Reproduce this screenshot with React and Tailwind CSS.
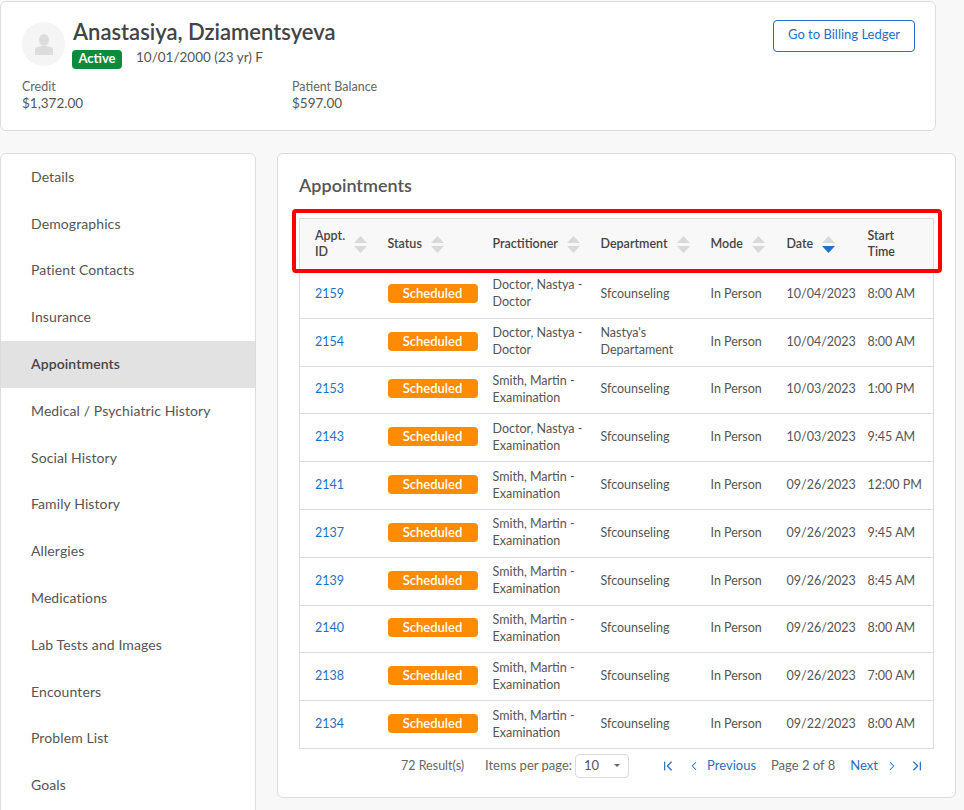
import React from 'react';
import { ChevronLeft, ChevronRight, ChevronFirst, ChevronLast } from 'lucide-react';

const navItems = [
  'Details', 'Demographics', 'Patient Contacts', 'Insurance', 'Appointments',
  'Medical / Psychiatric History', 'Social History', 'Family History', 'Allergies',
  'Medications', 'Lab Tests and Images', 'Encounters', 'Problem List', 'Goals',
];

const SM = 'Smith, Martin - Examination';
const rows = [
  ['2159', 'Doctor, Nastya - Doctor', 'Sfcounseling', '10/04/2023', '8:00 AM'],
  ['2154', 'Doctor, Nastya - Doctor', "Nastya's Departament", '10/04/2023', '8:00 AM'],
  ['2153', SM, 'Sfcounseling', '10/03/2023', '1:00 PM'],
  ['2143', 'Doctor, Nastya - Examination', 'Sfcounseling', '10/03/2023', '9:45 AM'],
  ['2141', SM, 'Sfcounseling', '09/26/2023', '12:00 PM'],
  ['2137', SM, 'Sfcounseling', '09/26/2023', '9:45 AM'],
  ['2139', SM, 'Sfcounseling', '09/26/2023', '8:45 AM'],
  ['2140', SM, 'Sfcounseling', '09/26/2023', '8:00 AM'],
  ['2138', SM, 'Sfcounseling', '09/26/2023', '7:00 AM'],
  ['2134', SM, 'Sfcounseling', '09/22/2023', '8:00 AM'],
];

const SortIcon = ({ active }) => (
  <svg width="13" height="19" viewBox="0 0 13 19" className="mt-[2px] shrink-0">
    <path d="M6.5 1 L13 8 L0 8 Z" fill="#d9d9d9" />
    <path d="M0 11 L13 11 L6.5 18 Z" fill={active ? '#1f6fc4' : '#d9d9d9'} />
  </svg>
);

const Th = ({ children, sort, active, className = '' }) => (
  <th className={`pl-4 pr-0 pb-[2px] font-semibold text-left text-[12.5px] leading-4 text-[#444] ${className}`}>
    <div className="flex items-center gap-[9px]">
      <span>{children}</span>
      {sort && <SortIcon active={active} />}
    </div>
  </th>
);

export default function App() {
  return (
    <div className="h-[810px] w-[964px] overflow-hidden bg-[#f8f8f8] pt-px font-['Lato','Open_Sans',sans-serif] text-[13px] text-[#555]">
      <div className="flex h-[130px] w-[936px] flex-col rounded-md border border-[#dcdcdc] bg-white pl-[21px] pr-5 pt-5">
        <div className="flex items-start justify-between">
          <div className="flex gap-2">
            <div className="flex h-[44px] w-[43px] items-center justify-center rounded-full bg-[#f5f5f5]">
              <svg width="18" height="21" viewBox="0 0 18 21">
                <ellipse cx="9" cy="6" rx="5" ry="6" fill="#dcdcdc" />
                <path d="M0 21 V16 C0 13 4 12 9 12 C14 12 18 13 18 16 V21 Z" fill="#dcdcdc" />
              </svg>
            </div>
            <div className="-mt-px">
              <div className="text-[22px] font-semibold leading-[22px] text-[#444]">Anastasiya, Dziamentsyeva</div>
              <div className="mt-[4px] -ml-px flex items-center gap-[14px]">
                <span className="flex h-[19px] w-[50px] items-center justify-center rounded-sm bg-[#0f8a3c] pb-[2px] text-[13px] font-bold text-white">Active</span>
                <span className="pb-[5px] text-[13.5px] text-[#555]">10/01/2000 (23 yr) F</span>
              </div>
            </div>
          </div>
          <button className="mt-[-2px] h-8 w-[142px] rounded border border-[#1f6fc4] pb-[3px] text-[13px] text-[#1f6fc4]">Go to Billing Ledger</button>
        </div>
        <div className="mt-[7px] flex">
          <div className="w-[270px]">
            <div className="text-[12.5px] leading-4 text-[#666]">Credit</div>
            <div className="text-[13.5px] leading-[17px]">$1,372.00</div>
          </div>
          <div>
            <div className="text-[12.5px] leading-4 text-[#666]">Patient Balance</div>
            <div className="text-[13.5px] leading-[17px]">$597.00</div>
          </div>
        </div>
      </div>

      <div className="mt-[22px] flex items-start gap-[21px]">
        <div className="w-[256px] shrink-0 rounded-md border border-[#dcdcdc] bg-white pb-4">
          {navItems.map((item) => (
            <div
              key={item}
              className={`flex h-[46.8px] items-center pb-[2px] pl-[30px] text-[14px] tracking-[0.1px] ${item === 'Appointments' ? 'bg-[#e2e2e2] font-semibold text-[#444]' : 'text-[#555]'}`}
            >
              {item}
            </div>
          ))}
        </div>

        <div className="relative h-[645px] w-[679px] rounded-md border border-[#dcdcdc] bg-white px-[21px]">
          <h2 className="pt-[20px] text-[18px] font-semibold leading-[22px] text-[#555]">Appointments</h2>
          <table className="mt-[22px] w-[634px] table-fixed border-collapse">
            <colgroup>
              <col className="w-[72px]" />
              <col className="w-[105px]" />
              <col className="w-[108px]" />
              <col className="w-[110px]" />
              <col className="w-[76px]" />
              <col className="w-[81px]" />
              <col className="w-[82px]" />
            </colgroup>
            <thead>
              <tr className="h-[52px] border border-[#dcdcdc] bg-[#f8f8f8]">
                <Th sort className="!pl-[15px]">Appt.<br />ID</Th>
                <Th sort>Status</Th>
                <Th sort>Practitioner</Th>
                <Th sort>Department</Th>
                <Th sort>Mode</Th>
                <Th sort active>Date</Th>
                <Th>Start<br />Time</Th>
              </tr>
            </thead>
            <tbody>
              {rows.map((r) => (
                <tr key={r[0]} className="h-[47.8px] border border-[#dcdcdc] text-[12.5px] leading-[17px]">
                  <td className="pb-[2px] pl-[15px] text-[#1f6fc4]">{r[0]}</td>
                  <td className="pb-[2px] pl-4">
                    <span className="flex h-[19px] w-[90px] items-center justify-center rounded-sm bg-[#ff8c00] text-[13px] font-semibold text-white">Scheduled</span>
                  </td>
                  <td className="pb-[2px] pl-4">{r[1]}</td>
                  <td className="pb-[2px] pl-4 pr-2">{r[2]}</td>
                  <td className="pb-[2px] pl-4">In Person</td>
                  <td className="pb-[2px] pl-4">{r[3]}</td>
                  <td className="pb-[2px] pl-4">{r[4]}</td>
                </tr>
              ))}
            </tbody>
          </table>

          <div className="mt-[5px] flex h-6 items-center text-[13px]">
            <span className="ml-[102px] w-[84px] text-[12.5px] text-[#666]">72 Result(s)</span>
            <span className="text-[#666]">Items per page:</span>
            <div className="ml-[3px] flex h-6 w-[54px] items-center justify-between rounded border border-[#dcdcdc] pl-2 pr-2">
              <span>10</span>
              <svg width="6" height="3" viewBox="0 0 6 3"><path d="M0 0 H6 L3 3 Z" fill="#666" /></svg>
            </div>
            <ChevronFirst size={16} strokeWidth={1.75} className="ml-[31px] text-[#1f6fc4]" />
            <ChevronLeft size={14} strokeWidth={1.75} className="ml-[11px] text-[#1f6fc4]" />
            <span className="ml-[6px] text-[#1f6fc4]">Previous</span>
            <span className="ml-[15px] text-[#666]">Page 2 of 8</span>
            <span className="ml-[15px] text-[#1f6fc4]">Next</span>
            <ChevronRight size={14} strokeWidth={1.75} className="ml-[7px] text-[#1f6fc4]" />
            <ChevronLast size={16} strokeWidth={1.75} className="ml-[10px] text-[#1f6fc4]" />
          </div>

          {/* annotation drawn on top of the header row */}
          <div className="pointer-events-none absolute left-[14px] top-[55px] h-[64px] w-[650px] rounded-sm border-4 border-[#f00]" />
        </div>
      </div>
    </div>
  );
}
